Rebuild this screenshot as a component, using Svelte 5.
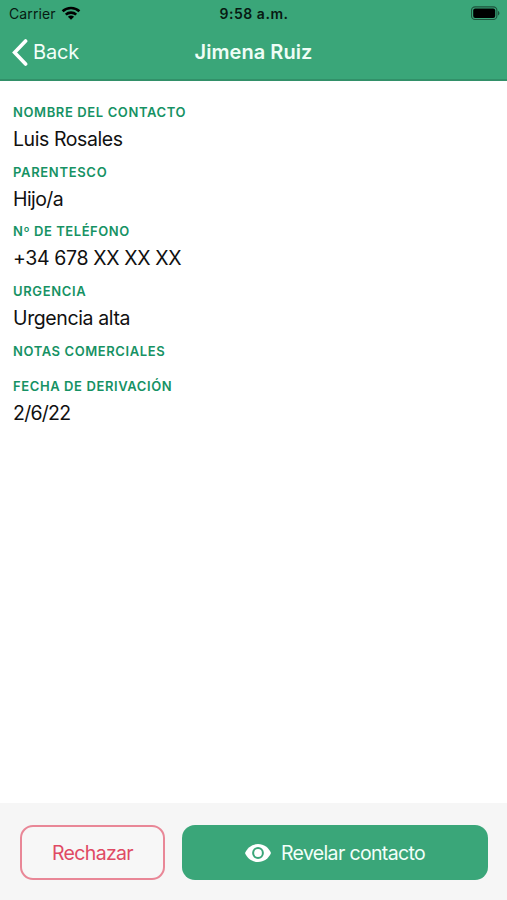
<script>
  const fields = [
    { label: 'Nombre del contacto', value: 'Luis Rosales', ls: 0.61, vs: -0.42 },
    { label: 'Parentesco', value: 'Hijo/a', ls: 0.68, vs: -0.6 },
    { label: 'Nº de teléfono', value: '+34 678 XX XX XX', ls: 0.56, vs: -0.36 },
    { label: 'Urgencia', value: 'Urgencia alta', ls: 0.66, vs: -0.38 },
    { label: 'Notas comerciales', value: '', ls: 0.59, vs: 0 },
    { label: 'Fecha de derivación', value: '2/6/22', ls: 0.6, vs: -0.75 }
  ];
</script>

<div class="screen">
  <header>
    <div class="status">
      <div class="carrier">
        <span>Carrier</span>
        <svg width="20" height="14" viewBox="0 0 20 14">
          <path d="M1.6 5.2C6.3.9 13.7.9 18.4 5.2M4.8 8.6C7.6 6 12.4 6 15.2 8.6" fill="none" stroke="#000" stroke-width="2.6" />
          <path d="M10 13.8 6.9 10.7C8.7 9.2 11.3 9.2 13.1 10.7Z" />
        </svg>
      </div>
      <time>9:58 a.m.</time>
      <svg class="battery" width="30" height="15" viewBox="0 0 30 15">
        <rect x=".5" y=".9" width="25.4" height="12.6" rx="3.6" fill="none" stroke="#000" stroke-opacity=".5" stroke-width="1.1" />
        <rect x="2.2" y="2.5" width="22" height="9.4" rx="2" />
        <path d="M27 5v4.4c1.9-.7 1.9-3.7 0-4.4" fill-opacity=".5" />
      </svg>
    </div>
    <nav>
      <button class="back">
        <svg width="16" height="27" viewBox="0 0 16 27">
          <path d="M13.6 2 2.6 13.5 13.6 25" fill="none" stroke="#fff" stroke-width="3.6" stroke-linecap="round" stroke-linejoin="miter" />
        </svg>
        <span>Back</span>
      </button>
      <h1>Jimena Ruiz</h1>
    </nav>
  </header>

  <main>
    <dl>
      {#each fields as f}
        <div class="field" class:empty={!f.value}>
          <dt style="letter-spacing: {f.ls}px">{f.label}</dt>
          <dd style="letter-spacing: {f.vs}px">{f.value}</dd>
        </div>
      {/each}
    </dl>
  </main>

  <footer>
    <button class="reject"><span>Rechazar</span></button>
    <button class="reveal">
      <svg width="26" height="18" viewBox="0 0 26 18">
        <path d="M13 0C7 0 2.2 3.8 0 9c2.200 5.200 7 9 13 9s10.800-3.800 13-9C23.800 3.800 19 0 13 0Z" fill="#fff" />
        <circle cx="13" cy="9" r="4.9" fill="#fff" stroke="#3aa679" stroke-width="2" />
      </svg>
      <span>Revelar contacto</span>
    </button>
  </footer>
</div>

<style>
  :global(body) { margin: 0; }
  .screen {
    width: 507px; height: 900px; display: flex; flex-direction: column;
    background: #fff; color: #111; overflow: hidden;
    font-family: Inter, "Liberation Sans", sans-serif;
  }
  button { font: inherit; margin: 0; cursor: pointer; white-space: nowrap; }
  svg { display: block; flex: none; }
  header {
    height: 81px; box-sizing: border-box; background: #3aa679;
    border-bottom: 2px solid #329069; flex: none;
  }
  .status, nav { display: grid; grid-template-columns: 1fr auto 1fr; align-items: center; }
  .status { height: 27px; padding: 0 6px 0 9px; color: #071a12; }
  .carrier { display: flex; align-items: center; gap: 5px; font-size: 14px; letter-spacing: 0.1px; }
  .carrier svg { margin-top: -2px; }
  time { font-size: 14px; font-weight: 600; letter-spacing: 0.55px; margin-right: 2px; }
  .battery { justify-self: end; }
  nav { height: 50px; padding: 0 12px; color: #fff; }
  .back {
    display: flex; align-items: center; gap: 5px; padding: 0; border: 0;
    background: none; color: #f2fff9; font-size: 20px; letter-spacing: -0.2px;
  }
  h1 { margin: 0; font-size: 20px; line-height: 24px; font-weight: 600; letter-spacing: 0.05px; color: #effdf6; }
  main { flex: 1; padding: 20px 13px 0; }
  dl, dd { margin: 0; }
  .field { height: 59.6px; }
  .field.empty { height: 35px; }
  .field.empty, .field:last-child { padding-top: 0.3px; }
  dt {
    font-size: 13px; line-height: 23px; font-weight: 600;
    text-transform: uppercase; color: #169264; white-space: nowrap;
  }
  dd { font-size: 19.5px; line-height: 31px; white-space: nowrap; }
  footer {
    height: 97.5px; box-sizing: border-box; flex: none; display: flex; gap: 17px;
    padding: 22.5px 19px 20px 20px; background: #f6f6f6;
  }
  footer button {
    display: flex; align-items: center; justify-content: center; box-sizing: border-box;
    border-radius: 13px; font-size: 19.5px; letter-spacing: -0.65px; padding: 0;
  }
  .reject { width: 145px; border: 2px solid #e98797; background: #f7f7f7; color: #e04a64; }
  .reveal { flex: 1; border: 0; gap: 10px; background: #3aa679; color: #f2fff9; }
</style>
